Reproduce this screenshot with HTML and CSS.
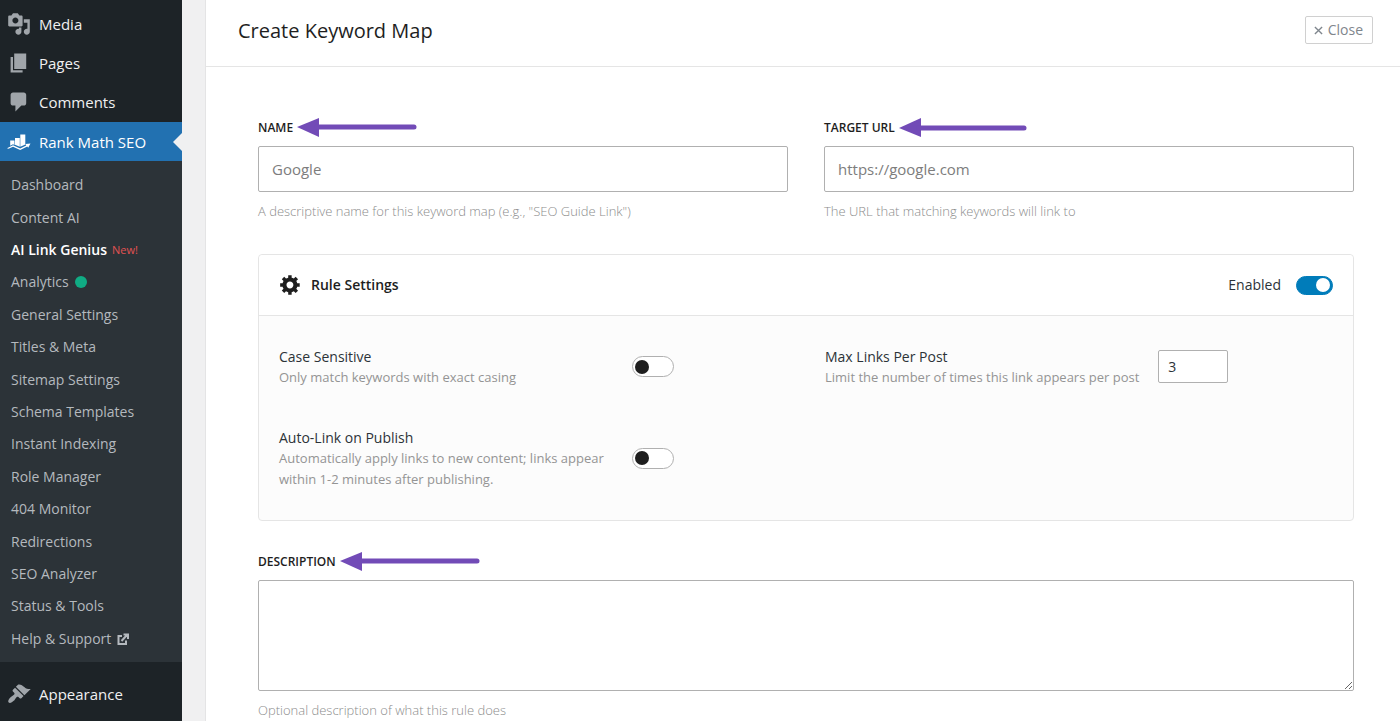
FILE: index.html
```html
<!DOCTYPE html>
<html lang="en">
<head>
  <meta charset="UTF-8" />
  <meta name="viewport" content="width=device-width, initial-scale=1.0" />
  <title>Create Keyword Map</title>
  <link rel="stylesheet" href="styles.css">
</head>
<body>
  <nav class="sidebar" aria-label="Main menu">
    <a class="menu-item" href="#">
      <svg class="menu-icon" viewBox="0 0 20 20"><path d="M13 11V4c0-.55-.45-1-1-1h-1.670L9 1H5L3.670 3H2c-.55 0-1 .45-1 1v7c0 .55.45 1 1 1h10c.55 0 1-.45 1-1zM7 4.500c1.380 0 2.500 1.120 2.500 2.500S8.380 9.500 7 9.500 4.500 8.380 4.500 7 5.620 4.500 7 4.500zM14 6h5v10.500c0 1.380-1.120 2.500-2.500 2.500S14 17.880 14 16.500s1.120-2.500 2.500-2.500c.170 0 .340.020.500.050V9h-3V6zm-4 8.050V13h2v3.500c0 1.380-1.120 2.500-2.500 2.500S7 17.880 7 16.500 8.120 14 9.500 14c.170 0 .340.020.500.050z"/></svg>
      Media
    </a>
    <a class="menu-item" href="#">
      <svg class="menu-icon" viewBox="0 0 20 20"><path d="M6 15V2h10v13H6zm-1 1h8v2H3V5h2v11z"/></svg>
      Pages
    </a>
    <a class="menu-item" href="#">
      <svg class="menu-icon" viewBox="0 0 20 20"><path d="M5 2h9c1.100 0 2 .9 2 2v7c0 1.100-.9 2-2 2h-2l-5 5v-5H5c-1.100 0-2-.9-2-2V4c0-1.100.9-2 2-2z"/></svg>
      Comments
    </a>
    <a class="menu-item current" href="#">
      <svg class="menu-icon" viewBox="0 0 24 24"><path d="M3.200 10.500h4.300v4.500L6 14.200l-2.800 1.500zM8 8h4.800v8.800L8 14.800zM13.300 4.500h5v10l-5 2.300zM0 18.300l6-3.100 7.200 3.200 6-2.900-.7-1.500 5-.5-2.300 4.200-.9-1.100-7.100 3.300-7.200-3.100-4.500 2z"/></svg>
      Rank Math SEO
    </a>
    <div class="submenu">
      <a href="#">Dashboard</a>
      <a href="#">Content AI</a>
      <a class="selected" href="#">AI Link Genius <span class="new">New!</span></a>
      <a href="#">Analytics <span class="dot"></span></a>
      <a href="#">General Settings</a>
      <a href="#">Titles &amp; Meta</a>
      <a href="#">Sitemap Settings</a>
      <a href="#">Schema Templates</a>
      <a href="#">Instant Indexing</a>
      <a href="#">Role Manager</a>
      <a href="#">404 Monitor</a>
      <a href="#">Redirections</a>
      <a href="#">SEO Analyzer</a>
      <a href="#">Status &amp; Tools</a>
      <a href="#">Help &amp; Support
        <svg class="external" viewBox="0 0 12 12"><path d="M5 3H1.500v8H9V7.500M4.500 8L10 2M6.500 1.500H11V6" /></svg>
      </a>
    </div>
    <a class="menu-item" href="#">
      <svg class="menu-icon" viewBox="0 0 20 20"><path d="M14.480 11.060L7.410 3.990l1.500-1.500c.500-.560 2.300-.470 3.510.320 1.210.800 1.430 1.280 2.910 2.100 1.180.640 2.450 1.260 4.450.850zm-.710.710L6.700 4.700 4.930 6.470c-.390.390-.390 1.020 0 1.410l1.060 1.060c.390.390.390 1.030 0 1.420-.600.600-1.430 1.110-2.210 1.690-.350.260-.700.530-1.010.840C1.430 14.230.400 16.080 1.400 17.070c.990 1 2.840-.030 4.180-1.360.310-.310.580-.660.850-1.020.570-.780 1.080-1.610 1.690-2.210.390-.390 1.020-.390 1.410 0l1.060 1.060c.390.390 1.020.390 1.410 0z"/></svg>
      Appearance
    </a>
  </nav>

  <main class="page">
    <header class="page-header">
      <h1>Create Keyword Map</h1>
      <button type="button" class="close-btn">
        <svg viewBox="0 0 10 10"><path d="M1 1l8 8M9 1L1 9"/></svg>
        Close
      </button>
    </header>

    <form class="form">
      <div class="fields">
        <div class="field">
          <div class="field-head">
            <label for="name">NAME</label>
            <svg class="arrow" width="120" height="20" viewBox="0 0 120 20"><path d="M0 9L22 0v19z"/><path class="line" d="M20 9h97"/></svg>
          </div>
          <input type="text" id="name" placeholder="Google">
          <p class="hint">A descriptive name for this keyword map (e.g., "SEO Guide Link")</p>
        </div>
        <div class="field">
          <div class="field-head">
            <label for="url">TARGET URL</label>
            <svg class="arrow" width="128" height="20" viewBox="0 0 128 20"><path d="M0 10L22 0v19z"/><path class="line" d="M20 10h105"/></svg>
          </div>
          <input type="text" id="url" placeholder="https://google.com">
          <p class="hint">The URL that matching keywords will link to</p>
        </div>
      </div>

      <section class="panel">
        <div class="panel-header">
          <svg class="gear" viewBox="0 1 20 20"><path d="M18 12h-2.180c-.170.700-.440 1.350-.810 1.930l1.540 1.540-2.100 2.100-1.540-1.540c-.580.360-1.230.630-1.910.790V19H8v-2.180c-.680-.160-1.330-.430-1.910-.790l-1.540 1.540-2.120-2.120 1.540-1.540c-.360-.580-.630-1.230-.790-1.910H1V9.030h2.170c.160-.700.440-1.350.800-1.940L2.430 5.550l2.100-2.100 1.540 1.540c.580-.370 1.240-.640 1.930-.810V2h3v2.180c.680.160 1.330.430 1.910.790l1.540-1.540 2.120 2.120-1.540 1.540c.360.590.640 1.240.800 1.940H18V12zm-8.500 1.500c1.660 0 3-1.340 3-3s-1.340-3-3-3-3 1.340-3 3 1.340 3 3 3z"/></svg>
          <h2>Rule Settings</h2>
          <label class="enabled" for="enabled">Enabled</label>
          <input type="checkbox" class="toggle small" id="enabled" checked>
        </div>
        <div class="panel-body">
          <div class="setting">
            <div class="setting-text">
              <label for="case">Case Sensitive</label>
              <p>Only match keywords with exact casing</p>
            </div>
            <input type="checkbox" class="toggle" id="case">
          </div>
          <div class="setting">
            <div class="setting-text auto">
              <label for="max">Max Links Per Post</label>
              <p>Limit the number of times this link appears per post</p>
            </div>
            <input type="number" id="max" value="3">
          </div>
          <div class="setting">
            <div class="setting-text">
              <label for="auto">Auto-Link on Publish</label>
              <p>Automatically apply links to new content; links appear within 1-2 minutes after publishing.</p>
            </div>
            <input type="checkbox" class="toggle" id="auto">
          </div>
        </div>
      </section>

      <div class="field">
        <div class="field-head">
          <label for="description">DESCRIPTION</label>
          <svg class="arrow" width="140" height="20" viewBox="0 0 140 20"><path d="M0 9L22 0v19z"/><path class="line" d="M20 9h117"/></svg>
        </div>
        <textarea id="description"></textarea>
        <p class="hint">Optional description of what this rule does</p>
      </div>
    </form>
  </main>
</body>
</html>
```
FILE: styles.css
```css
* { margin: 0; padding: 0; box-sizing: border-box; }
body {
  display: flex;
  height: 100vh;
  overflow: hidden;
  background: #f0f0f1;
  color: #2c3338;
  font-family: "Open Sans", "Noto Sans", sans-serif;
  font-size: 14px;
  line-height: 20px;
}
input, textarea, button { font: inherit; color: inherit; }

/* sidebar */
.sidebar {
  flex: 0 0 182px;
  padding-top: 4px;
  background: #1d2327;
}
.sidebar a { text-decoration: none; white-space: nowrap; }
.menu-item {
  display: flex;
  align-items: center;
  gap: 8px;
  height: 39px;
  padding-left: 7px;
  color: #f0f0f1;
  font-size: 15px;
}
.menu-icon { width: 24px; height: 24px; fill: #a0a5aa; }
.current { position: relative; margin-top: 1px; background: #2271b1; color: #fff; }
.current .menu-icon { fill: #fff; }
.current::after {
  content: "";
  position: absolute;
  right: 0;
  top: 11px;
  border: 9px solid transparent;
  border-right-color: #f0f0f1;
  border-left: 0;
}
.submenu {
  display: grid;
  grid-auto-rows: 1fr;
  min-height: 501px;
  margin-bottom: 12px;
  padding: 8px 11px 7px;
  background: #2c3338;
}
.submenu a {
  display: flex;
  align-items: center;
  gap: 6px;
  color: #b4b9be;
}
.submenu .selected { gap: 5px; color: #fff; font-weight: 600; }
.new { color: #e05252; font-size: 11px; font-weight: 400; }
.dot { width: 12px; height: 12px; border-radius: 50%; background: #10ac84; }
.external { width: 12px; height: 12px; fill: none; stroke: #b4b9be; stroke-width: 2; }

/* page */
.page {
  flex: 1;
  margin-left: 23px;
  border-left: 1px solid #e4e4e5;
  background: #fff;
}
.page-header {
  display: flex;
  align-items: center;
  justify-content: space-between;
  height: 67px;
  padding: 0 27px 6px 32px;
  border-bottom: 1px solid #e5e5e5;
}
h1 { color: #1e1e1e; font-size: 20px; font-weight: 400; line-height: 22px; padding-top: 2px; }
.close-btn {
  display: flex;
  align-items: center;
  gap: 5px;
  height: 28px;
  padding: 0 9px 0 8px;
  border: 1px solid #d0d0d0;
  border-radius: 2px;
  background: #fff;
  color: #7f868d;
}
.close-btn svg { width: 9px; height: 9px; fill: none; stroke: #7f868d; stroke-width: 1.5; }

.form { padding: 51px 46px 0 52px; }
.fields { display: grid; grid-template-columns: 1fr 1fr; gap: 36px; }
.field-head { display: flex; align-items: center; gap: 4px; height: 20px; margin-bottom: 8px; }
.field-head label { color: #1e1e1e; font-size: 12px; font-weight: 600; }
.arrow { fill: #724bb7; }
.arrow .line { stroke: #724bb7; stroke-width: 5; stroke-linecap: round; }
.field input, .field textarea {
  display: block;
  width: 100%;
  height: 46px;
  padding: 0 13px;
  border: 1px solid #b0b0b0;
  border-radius: 2px;
  background: #fff;
  font-size: 15px;
}
.field textarea { height: 111px; padding: 8px 13px; }
::placeholder { color: #7d7d7d; }
.hint { margin-top: 9px; color: #8c8c8c; font-size: 13px; font-weight: 300; }

.panel {
  margin: 33px 0 31px;
  border: 1px solid #e5e5e5;
  border-radius: 4px;
  background: #fcfcfc;
}
.panel-header {
  display: flex;
  align-items: center;
  height: 61px;
  padding: 0 20px;
  border-bottom: 1px solid #e5e5e5;
  border-radius: 4px 4px 0 0;
  background: #fff;
}
.gear { width: 23px; height: 23px; margin-right: 9px; fill: #1e1e1e; }
h2 { color: #1e1e1e; font-size: 14px; font-weight: 600; }
.enabled { margin-left: auto; margin-right: 15px; }
.panel-body {
  display: grid;
  grid-template-columns: 1fr 1fr;
  gap: 40px 38px;
  padding: 31px 20px 30px;
}
.setting { display: flex; align-items: center; gap: 19px; }
.setting-text { flex: 0 0 334px; }
.setting-text.auto { flex-basis: auto; }
.setting-text label { display: block; }
.setting-text p { color: #949494; font-size: 13px; line-height: 21px; }
.setting input { margin-bottom: 2px; }
.setting input[type="number"] {
  width: 70px;
  height: 33px;
  padding: 0 9px;
  border: 1px solid #b0b0b0;
  border-radius: 2px;
  background: #fff;
}

/* switches */
.toggle {
  appearance: none;
  display: flex;
  align-items: center;
  flex: none;
  width: 42px;
  height: 21px;
  padding: 0 2px;
  border: 1px solid #b0b0b0;
  border-radius: 11px;
  background: #fff;
}
.toggle::before {
  content: "";
  width: 14px;
  height: 14px;
  border-radius: 50%;
  background: #1e1e1e;
}
.toggle.small { width: 37px; height: 19px; }
.toggle:checked { justify-content: flex-end; border-color: #007cba; background: #007cba; }
.toggle:checked::before { background: #fff; }
```
